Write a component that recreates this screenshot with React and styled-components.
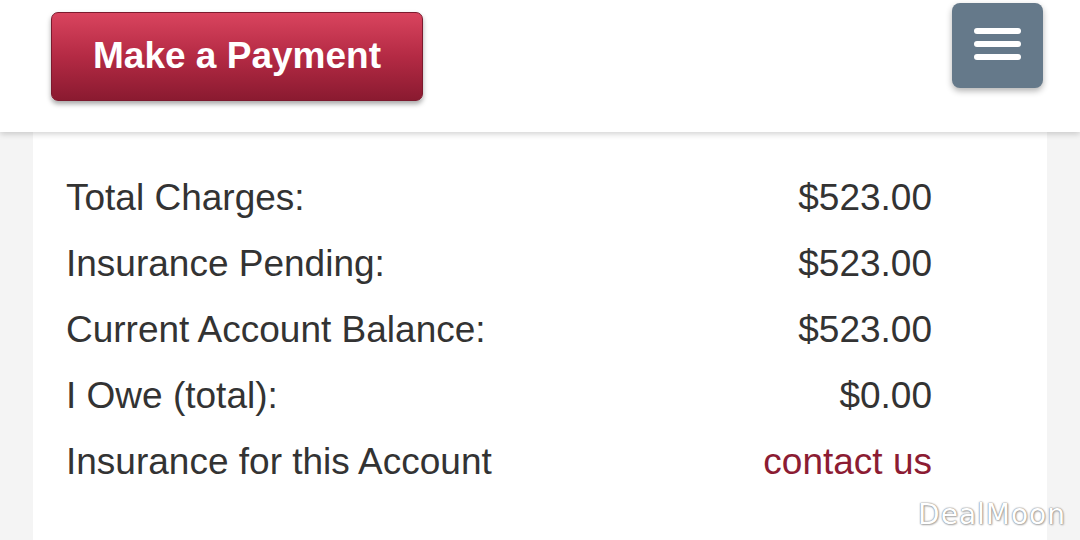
import React from "react";
import styled, { createGlobalStyle } from "styled-components";

const GlobalStyle = createGlobalStyle`
    html, body {
        margin: 0;
        padding: 0;
        background: #f4f4f4;
        font-family: "Liberation Sans", Arial, sans-serif;
    }
`;

const Page = styled.div`
    width: 1080px;
    height: 540px;
    overflow: hidden;
    position: relative;
    background: #f4f4f4;
`;

const Header = styled.header`
    position: relative;
    z-index: 2;
    height: 132px;
    background: #ffffff;
    box-shadow: 0 2px 6px rgba(0, 0, 0, 0.18);
    display: flex;
    justify-content: space-between;
    align-items: flex-start;
    padding: 0 37px 0 51px;
    box-sizing: border-box;
`;

const PayButton = styled.button`
    margin-top: 12px;
    width: 372px;
    height: 89px;
    border-radius: 7px;
    border: 1px solid #7c1a2e;
    background: linear-gradient(to bottom, #d9445e 0%, #b42a44 50%, #8a1a30 100%);
    box-shadow: 0 3px 5px rgba(0, 0, 0, 0.35);
    color: #ffffff;
    font-family: "Liberation Sans", Arial, sans-serif;
    font-weight: 700;
    font-size: 37px;
    padding: 0 0 2px 0;
    cursor: pointer;
`;

const MenuButton = styled.button`
    margin-top: 3px;
    width: 91px;
    height: 85px;
    border: none;
    border-radius: 8px;
    background: #65798a;
    box-shadow: 0 3px 6px rgba(0, 0, 0, 0.3);
    display: flex;
    flex-direction: column;
    align-items: center;
    justify-content: center;
    gap: 7px;
    padding: 0 0 3px 0;
    cursor: pointer;
`;

const MenuLine = styled.span`
    display: block;
    width: 47px;
    height: 6px;
    border-radius: 3px;
    background: #ffffff;
`;

const Card = styled.section`
    margin: 0 33px;
    height: 408px;
    background: #ffffff;
    padding: 33px 115px 0 33px;
    box-sizing: border-box;
    display: flex;
    flex-direction: column;
`;

const Row = styled.div`
    height: 66px;
    display: flex;
    justify-content: space-between;
    align-items: center;
    font-size: 37px;
    color: #333333;
`;

const Value = styled.span`
    color: ${p => (p.$link ? "#8c1c33" : "#333333")};
`;

const Watermark = styled.div`
    position: absolute;
    right: 14px;
    bottom: 9px;
    font-family: "DejaVu Sans", sans-serif;
    font-size: 28px;
    color: #ffffff;
    letter-spacing: 1px;
    text-shadow: 0 0 1px #7a7a7a, 0 0 2px #9a9a9a, 1px 1px 2px #b5b5b5;
`;

const rows = [
    { label: "Total Charges:", value: "$523.00" },
    { label: "Insurance Pending:", value: "$523.00" },
    { label: "Current Account Balance:", value: "$523.00" },
    { label: "I Owe (total):", value: "$0.00" },
    { label: "Insurance for this Account", value: "contact us", link: true },
];

const App = () => (
    <Page>
        <GlobalStyle />
        <Header>
            <PayButton>Make a Payment</PayButton>
            <MenuButton aria-label="Menu">
                <MenuLine />
                <MenuLine />
                <MenuLine />
            </MenuButton>
        </Header>
        <Card>
            {rows.map(row => (
                <Row key={row.label}>
                    <span>{row.label}</span>
                    <Value $link={row.link}>{row.value}</Value>
                </Row>
            ))}
        </Card>
        <Watermark>DealMoon</Watermark>
    </Page>
);

export default App;
